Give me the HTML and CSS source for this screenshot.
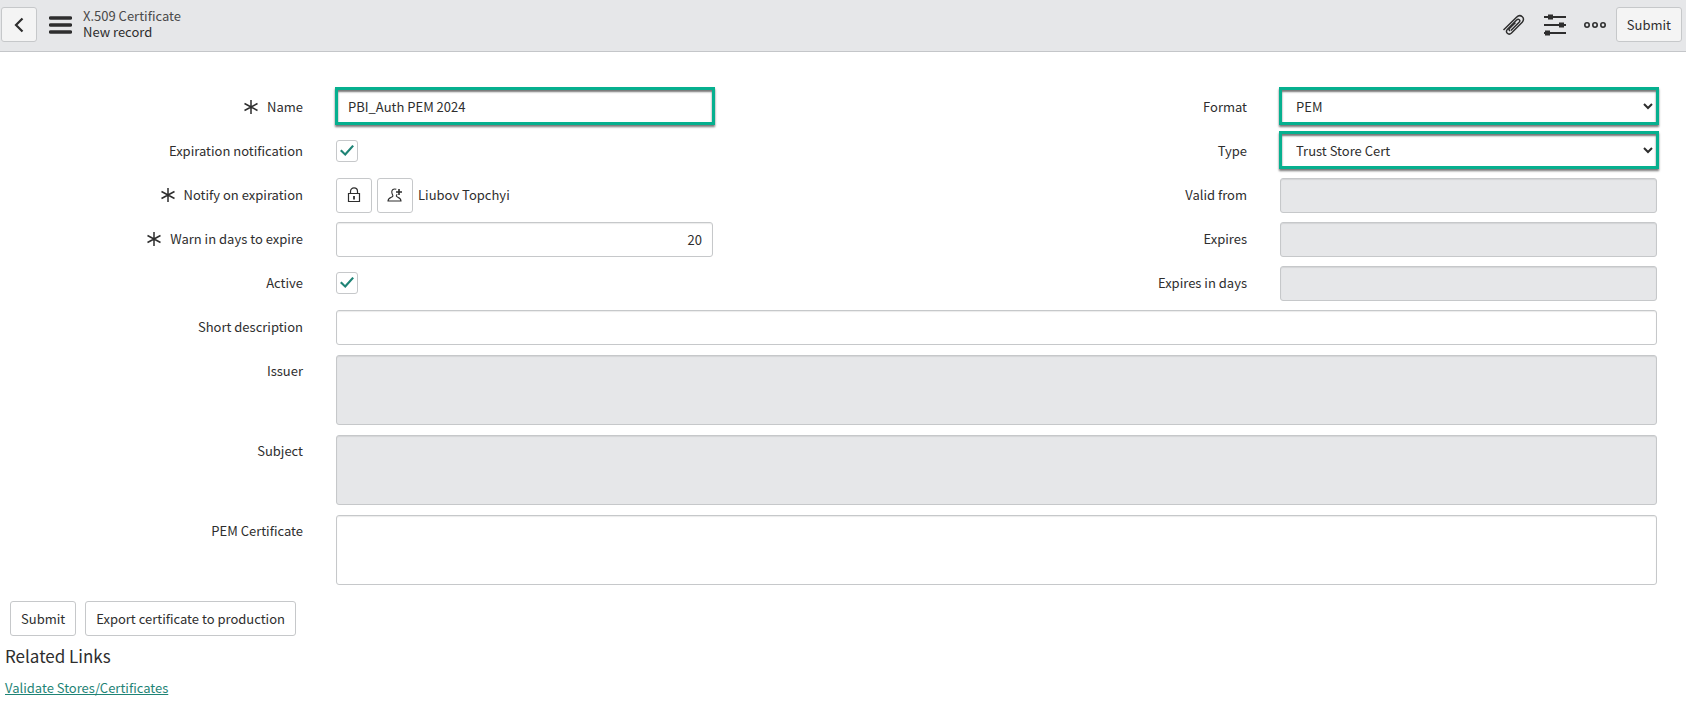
FILE: index.html
```html
<!DOCTYPE html>
<html lang="en">
<head>
  <meta charset="UTF-8">
  <meta name="viewport" content="width=device-width, initial-scale=1">
  <title>X.509 Certificate | New record</title>
  <link rel="stylesheet" href="styles.css">
</head>
<body>
  <!-- shared icon shapes -->
  <svg class="sprite" aria-hidden="true">
    <symbol id="required" viewBox="0 0 16 16">
      <path d="M8 1v14M1.500 4.500l13 7M14.500 4.500l-13 7" fill="none" stroke="currentColor" stroke-width="1.500"/>
    </symbol>
  </svg>

  <header class="navbar">
    <button type="button" class="btn btn-icon" aria-label="Back">
      <svg width="10" height="16" viewBox="0 0 10 16"><path d="M8.500 1.500L2 8l6.500 6.500" fill="none" stroke="currentColor" stroke-width="2.200"/></svg>
    </button>
    <button type="button" class="tool menu" aria-label="Additional actions">
      <svg width="23" height="18" viewBox="0 0 23 18"><path d="M1.500 2h20M1.500 9h20M1.500 16h20" stroke="currentColor" stroke-width="3.400" stroke-linecap="round"/></svg>
    </button>
    <div class="title">
      <div class="title-table">X.509 Certificate</div>
      <div>New record</div>
    </div>
    <div class="tools">
      <button type="button" class="tool" aria-label="Attachments">
        <svg width="24" height="22" viewBox="0 0 24 22"><path d="M1.500 16L14.500 3.200c4-3.800 9.500.8 5.700 5L9.500 19c-3 2.800-6.800-.8-4.200-3.600L14.600 6c2-1.900 4.300.4 2.500 2.300l-8.200 8.200M8.200 16.700c-1.300-.2-1.400-1.500-.5-2.400l5.800-5.800" fill="none" stroke="currentColor" stroke-width="1.500"/></svg>
      </button>
      <button type="button" class="tool" aria-label="Personalize form">
        <svg width="22" height="22" viewBox="0 0 22 22"><path d="M0 3h22M0 11h22M0 19h22" stroke="currentColor" stroke-width="1.800"/><path d="M4 .5h5v5H4zM15 8.500h5v5h-5zM1 16.500h5v5H1z" fill="currentColor"/></svg>
      </button>
      <button type="button" class="tool" aria-label="More options">
        <svg width="22" height="8" viewBox="0 0 22 8"><g fill="none" stroke="currentColor" stroke-width="1.600"><circle cx="3" cy="4" r="2.200"/><circle cx="11" cy="4" r="2.200"/><circle cx="19" cy="4" r="2.200"/></g></svg>
      </button>
      <button type="submit" form="certificate" class="btn">Submit</button>
    </div>
  </header>

  <form id="certificate" onsubmit="return false;">
    <div class="fields">
      <label class="label" for="name"><svg class="required"><use href="#required"/></svg>Name</label>
      <input class="control highlight" type="text" id="name" value="PBI_Auth PEM 2024">
      <label class="label" for="format">Format</label>
      <select class="control highlight" id="format"><option>PEM</option><option>DER</option></select>

      <label class="label" for="notification">Expiration notification</label>
      <input class="checkbox" type="checkbox" id="notification" checked>
      <label class="label" for="type">Type</label>
      <select class="control highlight" id="type"><option>Trust Store Cert</option><option>Java Key Store</option></select>

      <label class="label" for="unlock"><svg class="required"><use href="#required"/></svg>Notify on expiration</label>
      <div class="notify">
        <button type="button" class="btn btn-icon" id="unlock" aria-label="Unlock notify list">
          <svg width="14" height="16" viewBox="0 0 14 16"><path d="M1.500 6.500h11v8h-11zM3.500 6.500V4.300a3.500 3.500 0 0 1 7 0v2.200" fill="none" stroke="currentColor" stroke-width="1.200"/><path d="M7 9v3.500" stroke="currentColor" stroke-width="1.800"/></svg>
        </button>
        <button type="button" class="btn btn-icon" aria-label="Add me">
          <svg width="16" height="14" viewBox="0 0 16 14"><path d="M9.300 1.300C6.500.2 4.600 1.800 4.800 4.200c.1 1.900 1.100 2.700 1.100 3.900C5.900 9.500 1 9.300 1 13h13c0-3.700-4.700-3.500-4.700-4.900 0-.8.500-1.300.8-2" fill="none" stroke="currentColor" stroke-width="1.100"/><path d="M12 1v6M9 4h6" stroke="currentColor" stroke-width="1.600"/></svg>
        </button>
        <span>Liubov Topchyi</span>
      </div>
      <label class="label" for="validFrom">Valid from</label>
      <input class="control" type="text" id="validFrom" readonly>

      <label class="label" for="warnDays"><svg class="required"><use href="#required"/></svg>Warn in days to expire</label>
      <input class="control number" type="text" id="warnDays" value="20">
      <label class="label" for="expires">Expires</label>
      <input class="control" type="text" id="expires" readonly>

      <label class="label" for="active">Active</label>
      <input class="checkbox" type="checkbox" id="active" checked>
      <label class="label" for="expiresDays">Expires in days</label>
      <input class="control" type="text" id="expiresDays" readonly>

      <label class="label" for="description">Short description</label>
      <input class="control wide" type="text" id="description">

      <label class="label label-top" for="issuer">Issuer</label>
      <textarea class="control wide" id="issuer" readonly></textarea>

      <label class="label label-top" for="subject">Subject</label>
      <textarea class="control wide" id="subject" readonly></textarea>

      <label class="label label-top" for="pem">PEM Certificate</label>
      <textarea class="control wide" id="pem"></textarea>
    </div>

    <div class="actions">
      <button type="submit" class="btn">Submit</button>
      <button type="button" class="btn">Export certificate to production</button>
    </div>
  </form>

  <section class="related">
    <h2>Related Links</h2>
    <a href="#">Validate Stores/Certificates</a>
  </section>
</body>
</html>
```
FILE: styles.css
```css
* { box-sizing: border-box; }
body { margin: 0; background-color: #fff; color: #2e2e2e; font-family: "Noto Sans CJK JP", "Open Sans", sans-serif; font-size: 13px; line-height: 20px; }
button, input, select, textarea { margin: 0; font: inherit; color: inherit; }
.sprite { display: none; }

.navbar { display: flex; align-items: center; height: 52px; padding: 0 4px 2px 1px; background-color: #e6e7e9; border-bottom: 1px solid #c4c6c9; }
.navbar .btn { background-color: #f4f4f4; }
.title { padding-bottom: 2px; line-height: 16px; }
.title-table { color: #4a4a4a; }
.tools { display: flex; align-items: center; gap: 18px; margin-left: auto; }
.tools .btn { margin-left: -8px; }
.tool { display: flex; padding: 0; border: 0; background: none; }
.menu { margin: 0 11px 0 12px; }

.btn { height: 35px; padding: 0 10px; border: 1px solid #c6c8ca; border-radius: 3px; background-color: #fff; white-space: nowrap; }
.btn-icon { display: flex; align-items: center; justify-content: center; width: 36px; padding: 0; }

.fields { display: grid; grid-template-columns: 303fr 377fr 501fr 377fr; grid-template-rows: repeat(6, 44px) repeat(3, 80px); column-gap: 33px; align-items: center; padding: 33px 29px 0 0; }
.label { display: flex; align-items: center; justify-content: flex-end; text-align: right; }
.label-top { align-self: start; padding-top: 12px; }
.required { width: 16px; height: 16px; margin-right: 8px; }

.control { width: 100%; height: 35px; padding: 0 10px; border: 1px solid #c6c8ca; border-radius: 3px; background-color: #fff; box-shadow: inset 0 1px 1px rgba(0,0,0,0.08); }
.control:read-only:not(select) { background-color: #e6e7e9; }
.wide { grid-column: 2 / -1; }
.number { text-align: right; }
textarea.control { display: block; height: 70px; resize: none; }
textarea.wide { align-self: end; margin-bottom: 4px; }
.highlight { width: calc(100% + 3px); height: 38px; margin: 0 -1px 2px; border: 3px solid #06b08f; border-radius: 0; box-shadow: 0 2px 2px #777, inset 0 2px 2px #777; }

.checkbox { appearance: none; display: grid; place-content: center; width: 22px; height: 22px; margin-bottom: 1px; border: 1px solid #c6c8ca; border-radius: 3px; background-color: #fff; }
.checkbox:checked::before { content: ""; width: 14px; height: 11px; background-color: #1f8476; clip-path: polygon(0 55%, 11% 40%, 36% 72%, 88% 0, 100% 12%, 38% 100%); }

.notify { display: flex; align-items: center; gap: 5px; }

.actions { display: flex; gap: 9px; padding: 12px 10px 0; }
.related { padding: 8px 5px 0; }
.related h2 { margin: 0 0 10px; font-size: 17px; font-weight: normal; line-height: 24px; }
.related a { color: #1f8476; }
```
